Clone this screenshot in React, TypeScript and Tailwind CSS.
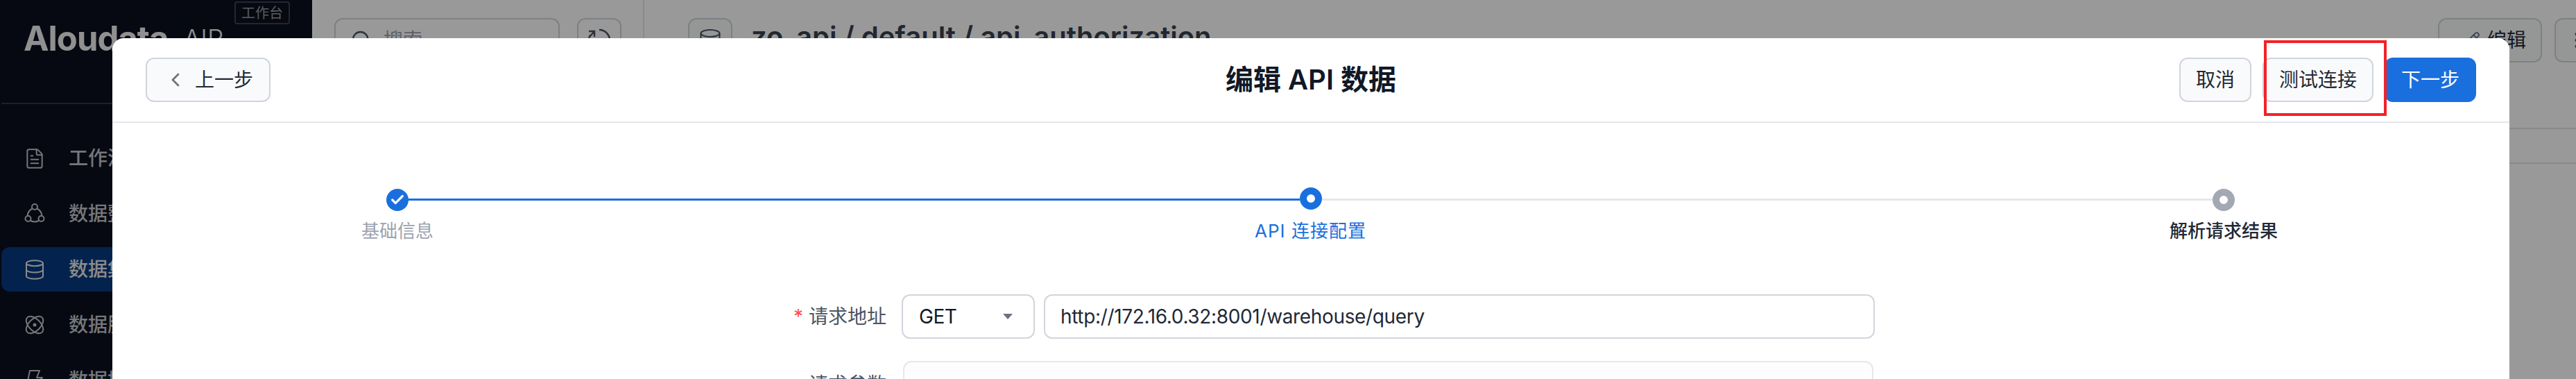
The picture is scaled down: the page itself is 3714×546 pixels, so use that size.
import React from 'react';
import { Check, ChevronLeft, Database, EllipsisVertical, FileText, Pencil, Search } from 'lucide-react';

const NAV_ITEMS = [
  { label: '工作流', icon: <FileText size={33} strokeWidth={1.5} /> },
  { label: '数据整合', icon: <FlowIcon /> },
  { label: '数据集', icon: <Database size={35} strokeWidth={1.5} />, active: true },
  { label: '数据服务', icon: <AtomIcon /> },
  { label: '数据接入', icon: <BoltIcon /> },
];

function FlowIcon() {
  return (
    <svg width="32" height="32" viewBox="0 0 32 32" fill="none" stroke="currentColor" strokeWidth="2">
      <circle cx="16" cy="6" r="4" />
      <circle cx="6.5" cy="23" r="4" />
      <circle cx="25.5" cy="23" r="4" />
      <path d="M12.5 8.5C8.5 10.5 6 14 5.5 19" />
      <path d="M19.5 8.5C23.5 10.5 26 14 26.5 19" />
      <path d="M10 26c4 2 8 2 12 0" />
    </svg>
  );
}

function AtomIcon() {
  return (
    <svg width="32" height="32" viewBox="0 0 32 32" fill="none" stroke="currentColor" strokeWidth="2">
      <ellipse cx="16" cy="16" rx="15" ry="8.5" transform="rotate(45 16 16)" />
      <ellipse cx="16" cy="16" rx="15" ry="8.5" transform="rotate(-45 16 16)" />
      <circle cx="16" cy="16" r="2.5" fill="currentColor" stroke="none" />
    </svg>
  );
}

function BoltIcon() {
  return (
    <svg width="32" height="32" viewBox="0 0 32 32" fill="none" stroke="currentColor" strokeWidth="2" strokeLinejoin="round">
      <path d="M9 2h14l-4 10h8L11 30l3-13H6z" />
    </svg>
  );
}

function RefreshIcon() {
  return (
    <svg width="36" height="36" viewBox="0 0 36 36" fill="none" stroke="currentColor" strokeWidth="2.5">
      <path d="M18 3a15 15 0 1 1-13 7.5" />
      <path d="M3 5h8v8M11 5 4 13" />
    </svg>
  );
}

function CylinderIcon() {
  return (
    <svg width="32" height="36" viewBox="0 0 32 36" fill="none" stroke="currentColor" strokeWidth="2">
      <ellipse cx="16" cy="8" rx="13.5" ry="5" />
      <path d="M2.5 8v20c0 3 6 5 13.5 5s13.5-2 13.5-5V8" />
    </svg>
  );
}

function Sidebar() {
  return (
    <aside className="relative w-[450px] shrink-0 bg-[#0a0f1e] text-[#c3c5cc]">
      <div className="ml-[2px] flex h-[150px] items-start gap-[22px] border-b-2 border-[#343842] pl-[32px] pt-[26px]">
        <span className="text-[49px] font-bold leading-[60px] tracking-[-1px] text-[#f0f0f0]">Aloudata</span>
        <span className="text-[37px] font-light leading-[60px] text-[#f0f0f0]">AIR</span>
      </div>
      <span className="absolute left-[338px] top-[2px] flex h-[33px] w-[80px] items-center justify-center rounded-[4px] border-2 border-[#3e414d] text-[20px] text-[#979aa0]">
        工作台
      </span>
      <nav className="flex flex-col gap-4 pl-[2px] pt-[46px]">
        {NAV_ITEMS.map((item) => (
          <div
            key={item.label}
            className={`flex h-16 items-center gap-[33px] rounded-l-xl pl-[32px] text-[28px] font-medium ${
              item.active ? 'bg-[#053a80] text-[#e8e8e8]' : ''
            }`}
          >
            <span className="flex w-8 shrink-0 justify-center">{item.icon}</span>
            <span>{item.label}</span>
          </div>
        ))}
      </nav>
    </aside>
  );
}

function PageContent() {
  return (
    <main className="flex min-w-0 flex-1 overflow-hidden bg-white">
      <div className="flex w-[479px] shrink-0 gap-[25px] border-r-2 border-[#e5e7eb] pl-[32px] pt-[26px]">
        <div className="flex h-16 w-[325px] items-center gap-[16px] rounded-xl border-2 border-[#d1d5db] pl-[21px] text-[28px] text-[#9ca3af]">
          <Search size={32} strokeWidth={1.75} className="text-[#4b5563]" />
          搜索
        </div>
        <div className="flex size-16 items-center justify-center rounded-xl border-2 border-[#d1d5db] text-[#4b5563]">
          <RefreshIcon />
        </div>
      </div>
      <div className="min-w-0 flex-1 pt-[26px]">
        <div className="flex h-16 items-start">
          <div className="ml-[63px] flex size-16 shrink-0 items-center justify-center rounded-xl border-2 border-[#d1d5db] bg-[#f9fafb] text-[#4b5563]">
            <CylinderIcon />
          </div>
          <h2 className="ml-[27px] text-[40px] font-semibold leading-[54px] text-[#374151]">zo_api / default / api_authorization</h2>
          <div className="ml-auto mr-[-33px] flex shrink-0 gap-[18px]">
            <button className="flex h-16 w-[150px] items-center gap-[10px] rounded-xl border-2 border-[#d1d5db] bg-[#f9fafb] pl-[33px] text-[28px] text-[#1f2937]">
              <Pencil size={26} strokeWidth={1.75} className="text-[#6b7280]" />
              编辑
            </button>
            <button className="flex size-16 items-center justify-center rounded-xl border-2 border-[#d1d5db] bg-[#f9fafb] text-[#4b5563]">
              <EllipsisVertical size={30} />
            </button>
          </div>
        </div>
        <div className="mt-[94px] h-[52px] border-y-2 border-[#e5e7eb]" />
      </div>
    </main>
  );
}

function Step({ label, labelClass, offset, children }: { label: string; labelClass: string; offset?: boolean; children: React.ReactNode }) {
  return (
    <div className={`flex w-[160px] shrink-0 flex-col items-center ${offset ? '-mt-[2px]' : ''}`}>
      {children}
      <span className={`whitespace-nowrap text-[26px] leading-9 ${offset ? 'mt-[13px]' : 'mt-[11px]'} ${labelClass}`}>{label}</span>
    </div>
  );
}

function EditModal() {
  return (
    <section className="absolute left-[162px] top-[55px] h-[600px] w-[3456px] rounded-t-2xl bg-white">
      <header className="grid h-[122px] grid-cols-[1fr_auto_1fr] items-center border-b-2 border-[#e5e7eb] px-12">
        <button className="flex h-16 w-[180px] items-center gap-[12px] justify-self-start rounded-xl border-2 border-[#d1d5db] bg-[#f9fafb] pl-[25px] text-[28px] text-[#1f2937]">
          <ChevronLeft size={32} strokeWidth={2} className="text-[#6b7280]" />
          上一步
        </button>
        <h1 className="text-[40px] font-semibold text-[#111827]">编辑 API 数据</h1>
        <div className="flex gap-4 justify-self-end">
          <button className="h-16 rounded-xl border-2 border-[#d1d5db] bg-[#f9fafb] px-[22px] text-[28px] text-[#1f2937]">取消</button>
          <button className="h-16 rounded-xl border-2 border-[#d1d5db] bg-[#f9fafb] px-[22px] text-[28px] text-[#1f2937]">测试连接</button>
          <button className="h-16 rounded-xl bg-[#1a6fde] px-6 text-[28px] text-white">下一步</button>
        </div>
      </header>

      <div className="ml-[331px] mr-[332px] flex items-start pt-[95px]">
        <Step label="基础信息" labelClass="text-[#9ca3af]">
          <span className="flex size-8 items-center justify-center rounded-full bg-[#1a6fde] text-white">
            <Check size={22} strokeWidth={3.5} />
          </span>
        </Step>
        <div className="-mx-[64px] mt-[14px] h-[3px] flex-1 bg-[#1a6fde]" />
        <Step label="API 连接配置" labelClass="tracking-[1px] text-[#1a6fde]" offset>
          <span className="size-8 rounded-full border-[10px] border-[#1a6fde] bg-white" />
        </Step>
        <div className="-mx-[64px] mt-[14px] h-[3px] flex-1 bg-[#e5e7eb]" />
        <Step label="解析请求结果" labelClass="font-medium text-[#1f2937]">
          <span className="size-8 rounded-full border-[10px] border-[#a3a8b5] bg-white" />
        </Step>
      </div>

      <div className="ml-[938px] mt-[73px] flex h-16 items-center">
        <label className="flex w-[178px] justify-end gap-[8px] text-[28px] text-[#4b5563]">
          <span className="text-[#ff4d4f]">*</span>
          请求地址
        </label>
        <div className="ml-[22px] flex h-16 w-[192px] items-center justify-between rounded-xl border-2 border-[#d1d5db] bg-white pl-[23px] pr-[30px] text-[28px] tracking-[-0.5px] text-[#111827]">
          GET
          <span className="border-x-[7px] border-t-[8px] border-x-transparent border-t-[#6b7280]" />
        </div>
        <div className="ml-[13px] flex h-16 w-[1198px] items-center rounded-xl border-2 border-[#d1d5db] bg-white pl-[22px] text-[28px] tracking-[-0.35px] text-[#1f2937]">
          http://172.16.0.32:8001/warehouse/query
        </div>
      </div>
      <div className="ml-[938px] mt-[32px] flex items-start">
        <label className="mt-[13px] w-[178px] text-right text-[28px] text-[#4b5563]">请求参数</label>
        <div className="ml-[24px] h-[200px] w-[1399px] rounded-xl border-2 border-[#e5e7eb] bg-[#fdfdfd]" />
      </div>
    </section>
  );
}

export default function App() {
  return (
    <div className="relative flex h-[546px] w-[3714px] overflow-hidden font-['Inter','Noto_Sans_CJK_SC',sans-serif]">
      <Sidebar />
      <PageContent />
      <div className="absolute inset-0 bg-black/40" />
      <EditModal />
      {/* annotation drawn over the screenshot */}
      <div className="absolute left-[3264px] top-[58px] h-[109px] w-[177px] border-4 border-[#f22228]" />
    </div>
  );
}
